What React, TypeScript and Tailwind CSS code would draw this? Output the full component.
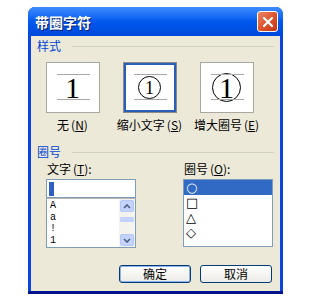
import React from 'react';

const cjk = { fontFamily: '"Noto Sans CJK SC", "Liberation Sans", sans-serif' };
const serif = { fontFamily: '"Liberation Serif", "DejaVu Serif", serif' };

const GroupLabel = ({ text }: { text: string }) => (
  <div className="flex items-center h-[12px] pl-[6px] pr-[6px]">
    <span className="text-[12px] leading-[12px] text-[#0046d5]" style={cjk}>{text}</span>
    <div className="flex-1 h-px bg-[#d0d0bf] ml-[11px]" />
  </div>
);

const Hotkey = ({ k }: { k: string }) => (
  <span className="ml-[2px]">(<span className="underline">{k}</span>)</span>
);

const StyleBox = ({ selected, children }: { selected?: boolean; children: React.ReactNode }) => (
  <div
    className={
      'relative w-[54px] h-[51px] bg-white flex items-center justify-center ' +
      (selected ? 'border border-[#8a8a8a] ring-[2px] ring-inset ring-[#2a5fb8]' : 'border border-[#a8a8a0]')
    }
  >
    <div className="absolute left-[10px] top-[11px] w-[33px] h-px bg-[#a8a8a8]" />
    <div className="absolute left-[10px] top-[36px] w-[33px] h-px bg-[#a8a8a8]" />
    {children}
  </div>
);

const ScrollArrow = ({ up }: { up?: boolean }) => (
  <div className="w-[14px] h-[12px] rounded-[2px] bg-[#c3d3fd] border border-[#b4c8f6] flex items-center justify-center">
    <svg width="8" height="5" viewBox="0 0 8 5">
      <path d={up ? 'M1 4 L4 1 L7 4' : 'M1 1 L4 4 L7 1'} fill="none" stroke="#4d6185" strokeWidth="1.6" />
    </svg>
  </div>
);

export default function App() {
  return (
    <div className="w-[309px] h-[302px] bg-white pt-[7px] pl-[28px]">
      <div className="w-[255px] h-[287px] flex flex-col rounded-t-[7px] bg-[#0a45dc] border-b-[3px] border-[#00138c]">
        {/* title bar */}
        <div className="h-[29px] flex items-center justify-between pl-[7px] pr-[5px] rounded-t-[7px] bg-gradient-to-b from-[#3d8cff] via-[#0058ee] to-[#0048dc]">
          <span
            className="text-white font-bold text-[14px] leading-[14px] [text-shadow:1px_1px_0_#0a1e6e]"
            style={cjk}
          >
            带圈字符
          </span>
          <div className="w-[21px] h-[21px] rounded-[3px] border border-white bg-gradient-to-br from-[#e8866a] via-[#e0542c] to-[#c1361a] flex items-center justify-center">
            <svg width="12" height="12" viewBox="0 0 12 12">
              <path d="M2 2 L10 10 M10 2 L2 10" stroke="white" strokeWidth="2.2" strokeLinecap="round" />
            </svg>
          </div>
        </div>

        {/* body */}
        <div className="flex-1 mx-[3px] bg-[#ece9d8] flex flex-col pt-[4px] text-[12px] text-black" style={cjk}>
          <GroupLabel text="样式" />

          <div className="grid grid-cols-[77px_77px_77px] pl-[3px] mt-[10px]">
            <div className="flex flex-col items-center">
              <StyleBox>
                <span className="text-[30px] leading-none mt-[1px]" style={serif}>1</span>
              </StyleBox>
              <span className="mt-[6px] leading-[12px]">无<Hotkey k="N" /></span>
            </div>
            <div className="flex flex-col items-center">
              <StyleBox selected>
                <div className="w-[23px] h-[23px] rounded-full border-[1.5px] border-black flex items-center justify-center">
                  <span className="text-[18px] leading-none" style={serif}>1</span>
                </div>
              </StyleBox>
              <span className="mt-[6px] leading-[12px]">缩小文字<Hotkey k="S" /></span>
            </div>
            <div className="flex flex-col items-center">
              <StyleBox>
                <div className="w-[29px] h-[29px] rounded-full border border-black flex items-center justify-center">
                  <span className="text-[30px] leading-none" style={serif}>1</span>
                </div>
              </StyleBox>
              <span className="mt-[6px] leading-[12px]">增大圈号<Hotkey k="E" /></span>
            </div>
          </div>

          <div className="mt-[15px]">
            <GroupLabel text="圈号" />
          </div>

          <div className="flex pl-[15px] mt-[5px]">
            <div className="flex flex-col w-[90px]">
              <span className="leading-[12px] ml-[1px]">文字<Hotkey k="T" />:</span>
              <div className="mt-[4px] h-[19px] bg-white border border-[#7f9db9] flex items-center pl-[2px]">
                <div className="w-[5px] h-[14px] bg-[#2f5fc0]" />
              </div>
              <div className="h-[50px] bg-white border border-[#7f9db9] border-t-[#b4b4b4] flex">
                <div className="flex-1 flex flex-col pl-[3px] pt-[1px] text-[10px] leading-[11.5px]" style={{ fontFamily: '"Liberation Mono", monospace' }}>
                  <span>A</span>
                  <span>a</span>
                  <span>!</span>
                  <span>1</span>
                </div>
                <div className="w-[16px] bg-[#f4f3ee] flex flex-col items-center justify-between py-[1px]">
                  <ScrollArrow up />
                  <div className="w-[14px] h-[5px] rounded-[1px] bg-[#c3d3fd] mb-auto mt-[5px]" />
                  <ScrollArrow />
                </div>
              </div>
            </div>

            <div className="flex flex-col w-[90px] ml-[47px]">
              <span className="leading-[12px] ml-[1px]">圈号<Hotkey k="O" />:</span>
              <div className="mt-[4px] h-[68px] bg-white border border-[#7f9db9] flex flex-col text-[13px]" style={{ fontFamily: '"DejaVu Sans", sans-serif' }}>
                <div className="h-[15px] bg-[#316ac5] text-white flex items-center pl-[2px] leading-none">○</div>
                <div className="h-[15px] flex items-center pl-[2px] leading-none">□</div>
                <div className="h-[15px] flex items-center pl-[2px] leading-none">△</div>
                <div className="h-[15px] flex items-center pl-[2px] leading-none">◇</div>
              </div>
            </div>
          </div>

          <div className="flex justify-end gap-[9px] pr-[8px] mt-auto mb-[8px]">
            <button className="w-[72px] h-[18px] rounded-[3px] border border-[#003c74] bg-gradient-to-b from-white to-[#ecebe6] ring-1 ring-inset ring-[#8eb1f0] text-[12px] leading-none" style={cjk}>
              确定
            </button>
            <button className="w-[72px] h-[18px] rounded-[3px] border border-[#003c74] bg-gradient-to-b from-white to-[#ecebe6] text-[12px] leading-none" style={cjk}>
              取消
            </button>
          </div>
        </div>
      </div>
    </div>
  );
}
